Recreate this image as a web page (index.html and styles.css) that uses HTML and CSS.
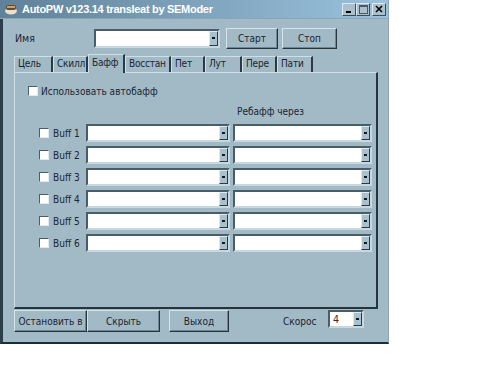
FILE: index.html
```html
<!DOCTYPE html>
<html>
<head>
<meta charset="utf-8">
<link rel="stylesheet" href="styles.css">
</head>
<body>
<div class="window">
  <div class="titlebar">
    <svg class="appicon" width="14" height="12" viewBox="0 0 14 12">
      <ellipse cx="7" cy="8" rx="6" ry="3.5" fill="#e8e0d0"/>
      <rect x="2" y="2" width="10" height="5" rx="2" fill="#6b4a2a"/>
      <rect x="3" y="3" width="8" height="2" fill="#c8a070"/>
    </svg>
    <span class="title">AutoPW v123.14 transleat by SEModer</span>
    <div class="tbtns">
      <span class="tbtn"><svg width="8" height="8" viewBox="0 0 8 8"><rect x="1" y="6" width="5" height="2" fill="#000"/></svg></span>
      <span class="tbtn"><svg width="9" height="9" viewBox="0 0 9 9"><rect x="0.5" y="0.5" width="8" height="8" fill="none" stroke="#556" stroke-width="1"/><rect x="0.5" y="0.5" width="8" height="1.5" fill="#556"/></svg></span>
      <span class="tbtn close"><svg width="8" height="8" viewBox="0 0 8 8"><path d="M1 1L7 7M7 1L1 7" stroke="#000" stroke-width="1.6"/></svg></span>
    </div>
  </div>
  <div class="body">
    <div class="toprow">
      <span class="namelabel">Имя</span>
      <div class="combo namecombo"><div class="field"></div><span class="drop"></span></div>
      <button class="btn start">Старт</button>
      <button class="btn stop">Стоп</button>
    </div>
    <div class="tabs">
      <span class="tab t1">Цель</span>
      <span class="tab t2">Скилл</span>
      <span class="tab t3 active">Бафф</span>
      <span class="tab t4">Восстан</span>
      <span class="tab t5">Пет</span>
      <span class="tab t6">Лут</span>
      <span class="tab t7">Пере</span>
      <span class="tab t8">Пати</span>
    </div>
    <div class="panel">
      <label class="autobuff"><span class="check"></span>Использовать автобафф</label>
      <div class="rebuff">Ребафф через</div>
      <div class="rows">
        <div class="row"><span class="check"></span><span class="blabel">Buff 1</span><div class="combo c1"><div class="field"></div><span class="drop"></span></div><div class="combo c2"><div class="field"></div><span class="drop"></span></div></div>
        <div class="row"><span class="check"></span><span class="blabel">Buff 2</span><div class="combo c1"><div class="field"></div><span class="drop"></span></div><div class="combo c2"><div class="field"></div><span class="drop"></span></div></div>
        <div class="row"><span class="check"></span><span class="blabel">Buff 3</span><div class="combo c1"><div class="field"></div><span class="drop"></span></div><div class="combo c2"><div class="field"></div><span class="drop"></span></div></div>
        <div class="row"><span class="check"></span><span class="blabel">Buff 4</span><div class="combo c1"><div class="field"></div><span class="drop"></span></div><div class="combo c2"><div class="field"></div><span class="drop"></span></div></div>
        <div class="row"><span class="check"></span><span class="blabel">Buff 5</span><div class="combo c1"><div class="field"></div><span class="drop"></span></div><div class="combo c2"><div class="field"></div><span class="drop"></span></div></div>
        <div class="row"><span class="check"></span><span class="blabel">Buff 6</span><div class="combo c1"><div class="field"></div><span class="drop"></span></div><div class="combo c2"><div class="field"></div><span class="drop"></span></div></div>
      </div>
    </div>
    <div class="bottomrow">
      <button class="btn b1">Остановить в</button>
      <button class="btn b2">Скрыть</button>
      <button class="btn b3">Выход</button>
      <span class="speed">Скорос</span>
      <div class="combo speedcombo"><div class="field">4</div><span class="drop"></span></div>
    </div>
  </div>
</div>
</body>
</html>
```

FILE: styles.css
```css
html, body {
  margin: 0;
  padding: 0;
  background: #ffffff;
}
body {
  font-family: "DejaVu Sans Condensed", "DejaVu Sans", sans-serif;
  font-stretch: condensed;
  font-size: 10px;
  color: #1a2630;
}
.window {
  width: 389px;
  height: 344px;
  box-sizing: border-box;
  background: #a2b9c6;
  border-left: 3px solid #2c3e4a;
  border-bottom: 2px solid #1f2d36;
  border-right: 1px solid #8fa5b2;
  display: flex;
  flex-direction: column;
}
.titlebar {
  height: 18px;
  margin-left: -3px;
  background: linear-gradient(to right, #5f8199 0%, #7b9fb8 45%, #9ac2de 100%);
  display: flex;
  align-items: center;
  padding-left: 4px;
  border-bottom: 1px solid #8aa6b8;
}
.appicon {
  margin-right: 4px;
}
.title {
  color: #ffffff;
  font-family: "Liberation Sans", Arial, sans-serif;
  font-stretch: normal;
  font-weight: bold;
  font-size: 11px;
  letter-spacing: -0.3px;
  flex: 1;
}
.tbtns {
  display: flex;
  margin-right: 2px;
}
.tbtn {
  width: 12px;
  height: 11px;
  background: #a9c0cd;
  border: 1px solid;
  border-color: #dfe9ef #3a4c58 #3a4c58 #dfe9ef;
  display: flex;
  align-items: center;
  justify-content: center;
}
.tbtn.close {
  margin-left: 2px;
}
.body {
  flex: 1;
  padding: 0 0 0 11px;
  display: flex;
  flex-direction: column;
}
.toprow {
  display: flex;
  align-items: center;
  height: 22px;
  margin-top: 8px;
}
.namelabel {
  width: 79px;
  padding-left: 1px;
  font-size: 10.5px;
}
.combo {
  display: flex;
  height: 19px;
  box-sizing: border-box;
  border: 2px solid;
  border-color: #4a5e6a #c8d8e0 #c8d8e0 #4a5e6a;
  background: #fff;
}
.combo .field {
  flex: 1;
  background: #fff;
  font-size: 10.5px;
  line-height: 14px;
  padding-left: 3px;
}
.combo .drop {
  width: 9px;
  box-sizing: border-box;
  background: #a9c0cd;
  border: 1px solid;
  border-color: #e0eaf0 #2c3a44 #2c3a44 #e0eaf0;
  position: relative;
}
.combo .drop::after {
  content: "";
  position: absolute;
  left: 2px;
  top: 50%;
  margin-top: -1px;
  width: 3px;
  height: 2px;
  background: #101820;
}
.namecombo {
  width: 126px;
}
.btn {
  font-family: "DejaVu Sans Condensed", "DejaVu Sans", sans-serif;
  font-stretch: condensed;
  font-size: 10px;
  color: #1a2630;
  background: #a2b9c6;
  border: 1px solid;
  border-color: #d6e3ea #26343e #26343e #d6e3ea;
  box-shadow: inset -1px -1px 0 #6e8796;
  padding: 0;
  margin: 0;
  height: 21px;
}
.start {
  width: 52px;
  margin-left: 6px;
}
.stop {
  width: 55px;
  margin-left: 4px;
}
.tabs {
  display: flex;
  align-items: flex-end;
  height: 18px;
  margin-top: 5px;
  position: relative;
  z-index: 1;
}
.tab {
  height: 16px;
  box-sizing: border-box;
  line-height: 14px;
  padding-left: 3px;
  letter-spacing: -0.2px;
  white-space: nowrap;
  overflow: hidden;
  border-top: 1px solid #d0dee6;
  border-left: 1px solid #d0dee6;
  border-right: 2px solid #2a3a44;
  background: #a2b9c6;
}
.tab.active {
  height: 19px;
  line-height: 16px;
  margin-bottom: -1px;
}
.t1 { width: 39px; }
.t2 { width: 35px; }
.t3 { width: 37px; }
.t4 { width: 46px; }
.t5 { width: 34px; }
.t6 { width: 37px; }
.t7 { width: 35px; }
.t8 { width: 36px; }
.panel {
  width: 364px;
  height: 237px;
  box-sizing: border-box;
  border: 1px solid;
  border-color: #d0dee6 #26343e #26343e #d0dee6;
  border-right-width: 2px;
  border-bottom-width: 2px;
  display: flex;
  flex-direction: column;
  padding-top: 11px;
}
.autobuff {
  display: flex;
  align-items: center;
  padding-left: 13px;
  height: 14px;
  gap: 3px;
}
.check {
  display: inline-block;
  width: 10px;
  height: 10px;
  box-sizing: border-box;
  background: #fff;
  border: 1px solid;
  border-color: #4a5e6a #e0eaf0 #e0eaf0 #4a5e6a;
}
.rebuff {
  margin-top: 7px;
  padding-left: 222px;
  height: 14px;
  line-height: 14px;
}
.rows {
  margin-top: 5px;
  display: flex;
  flex-direction: column;
  gap: 4px;
}
.row {
  display: flex;
  align-items: center;
  height: 18px;
  padding-left: 24px;
}
.row .blabel {
  margin-left: 4px;
  width: 33px;
}
.row .combo {
  height: 18px;
}
.c1 {
  width: 144px;
}
.c2 {
  width: 139px;
  margin-left: 3px;
}
.bottomrow {
  display: flex;
  align-items: center;
  margin-top: 1px;
  height: 22px;
}
.b1 { width: 73px; height: 22px; }
.b2 { width: 73px; height: 22px; }
.b3 { width: 60px; height: 22px; margin-left: 9px; }
.speed {
  margin-left: 54px;
  width: 45px;
}
.speedcombo {
  width: 36px;
  height: 18px;
  margin-top: -4px;
}
.speedcombo .field {
  color: #5a2020;
  line-height: 14px;
}
```
